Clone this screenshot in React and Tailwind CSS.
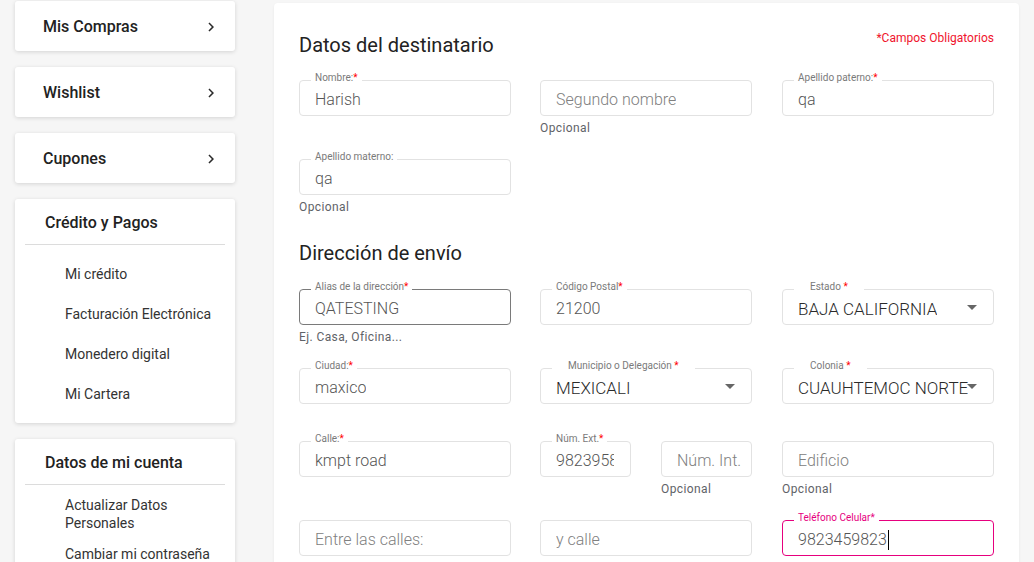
import React from "react";

const Chevron = () => (
  <svg width="18" height="18" viewBox="0 0 24 24" className="shrink-0">
    <path d="M10 6L8.59 7.41 13.17 12l-4.58 4.59L10 18l6-6z" fill="#2b2b2b" />
  </svg>
);

const Arrow = () => (
  <svg width="24" height="24" viewBox="0 0 24 24" className="absolute right-[9px] top-1/2 -translate-y-1/2">
    <path d="M7 10l5 5 5-5z" fill="#666" />
  </svg>
);

function Field({ label, req, value, placeholder, select, helper, w = "w-[212px]", tone = "normal", labelWide, pr = "pr-4" }) {
  const border =
    tone === "pink" ? "border-[#e6007e]" : tone === "dark" ? "border-[#7a7a7a]" : "border-[#e2e2e2]";
  return (
    <div className={`flex flex-col ${w}`}>
      <div className={`relative h-9 rounded-[4px] border ${border} bg-white flex items-center pl-[15px] ${pr}`}>
        {label && (
          <span
            className={`absolute top-[-9px] left-[11px] bg-white text-[10px] leading-[12px] whitespace-nowrap ${
              labelWide ? "px-4" : "px-1"
            } ${tone === "pink" ? "text-[#e6007e]" : "text-[#7a7a7a]"}`}
          >
            {label}
            {req && <span className={tone === "pink" ? "text-[#e6007e]" : "text-[#f00]"}>{labelWide ? " *" : "*"}</span>}
          </span>
        )}
        <div
          className={`overflow-hidden whitespace-nowrap leading-[20px] font-light pt-[4px] flex items-center ${
            select ? "text-[17px]" : "text-[16px]"
          }`}
        >
          {value ? (
            <span className={select ? "text-[#2a2a2a]" : "text-[#555]"}>{value}</span>
          ) : (
            <span className="text-[#808080]">{placeholder}</span>
          )}
          {tone === "pink" && <span className="inline-block w-px h-[20px] bg-black ml-[1px]" />}
        </div>
        {select && <Arrow />}
      </div>
      {helper && (
        <div className="mt-[4px] text-[12px] leading-[16px] tracking-[0.4px] text-[#5f6368]">{helper}</div>
      )}
    </div>
  );
}

function SimpleCard({ title, mt = "" }) {
  return (
    <div className={`h-[50px] shrink-0 bg-white rounded-[3px] shadow-[0_1px_4px_rgba(0,0,0,0.14)] flex items-center justify-between pl-[28px] pr-[15px] pt-[2px] ${mt}`}>
      <span className="text-[16px] font-medium text-[#222]">{title}</span>
      <Chevron />
    </div>
  );
}

function ListCard({ title, items, mt = "" }) {
  return (
    <div className={`shrink-0 bg-white rounded-[3px] shadow-[0_1px_4px_rgba(0,0,0,0.14)] px-[10px] pt-[14px] pb-[9px] ${mt}`}>
      <div className="pl-[20px] text-[16px] leading-[20px] font-medium text-[#222]">{title}</div>
      <div className="mt-[11px] h-px bg-[#dcdcdc]" />
      <div className="mt-[9px] flex flex-col">
        {items.map((it) => (
          <div key={it} className="h-10 flex items-center pl-[40px] pr-[10px] text-[14px] leading-[18px] text-[#333]">
            {it}
          </div>
        ))}
      </div>
    </div>
  );
}

const row = "grid grid-cols-[241px_242px_212px] items-start";

export default function App() {
  return (
    <div className="h-[562px] w-[1034px] overflow-hidden bg-[#f6f6f6] font-['Roboto',sans-serif] flex pl-[15px]">
      <div className="w-[220px] shrink-0 pt-[1px] flex flex-col">
        <SimpleCard title="Mis Compras" />
        <SimpleCard title="Wishlist" mt="mt-[16px]" />
        <SimpleCard title="Cupones" mt="mt-[16px]" />
        <ListCard
          title="Crédito y Pagos"
          items={["Mi crédito", "Facturación Electrónica", "Monedero digital", "Mi Cartera"]}
          mt="mt-[16px]"
        />
        <ListCard
          title="Datos de mi cuenta"
          items={["Actualizar Datos Personales", "Cambiar mi contraseña", "Mis direcciones"]}
          mt="mt-[16px]"
        />
      </div>

      <div className="ml-[39px] mt-[3px] w-[745px] shrink-0 bg-white rounded-[4px] shadow-[0_1px_3px_rgba(0,0,0,0.06)] pl-[25px] pr-[25px] pt-[29px] h-[700px]">
        <div className="flex justify-between items-start">
          <h2 className="mt-[1px] text-[20px] leading-[24px] text-[#222]">Datos del destinatario</h2>
          <span className="mt-[-2px] text-[12px] leading-[16px] text-[#f0142d]">*Campos Obligatorios</span>
        </div>

        <div className={`mt-[23px] ${row}`}>
          <Field label="Nombre:" req value="Harish" />
          <Field placeholder="Segundo nombre" helper="Opcional" />
          <Field label="Apellido paterno:" req value="qa" />
        </div>

        <div className={`mt-[23px] ${row}`}>
          <Field label="Apellido materno:" value="qa" helper="Opcional" />
        </div>

        <h2 className="mt-[26px] text-[20px] leading-[24px] text-[#222]">Dirección de envío</h2>

        <div className={`mt-[24px] ${row}`}>
          <Field label="Alias de la dirección" req value="QATESTING" helper="Ej. Casa, Oficina..." tone="dark" />
          <Field label="Código Postal" req value="21200" />
          <Field label="Estado" req value="BAJA CALIFORNIA" select labelWide />
        </div>

        <div className={`mt-[23px] ${row}`}>
          <Field label="Ciudad:" req value="maxico" />
          <Field label="Municipio o Delegación" req value="MEXICALI" select labelWide />
          <Field label="Colonia" req value="CUAUHTEMOC NORTE" select labelWide pr="pr-[8px]" />
        </div>

        <div className={`mt-[37px] ${row}`}>
          <Field label="Calle:" req value="kmpt road" />
          <div className="flex gap-x-[30px]">
            <Field label="Núm. Ext." req value="9823958234" w="w-[91px]" />
            <Field placeholder="Núm. Int." helper="Opcional" w="w-[91px]" pr="pr-[8px]" />
          </div>
          <Field placeholder="Edificio" helper="Opcional" />
        </div>

        <div className={`mt-[23px] ${row}`}>
          <Field placeholder="Entre las calles:" />
          <Field placeholder="y calle" />
          <Field label="Teléfono Celular" req value="9823459823" tone="pink" />
        </div>
      </div>
    </div>
  );
}
